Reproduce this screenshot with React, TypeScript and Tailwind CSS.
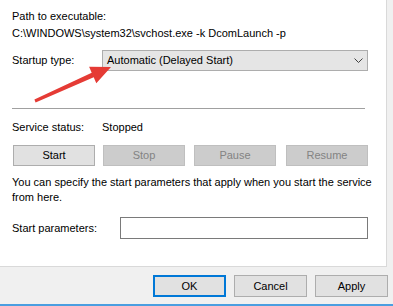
import React from "react";

const font = { fontFamily: '"Liberation Sans", Arial, sans-serif' };

function Btn({ children, disabled, w, className = "" }: { children: React.ReactNode; disabled?: boolean; w: string; className?: string }) {
  return (
    <div
      className={
        "flex items-center justify-center h-[21px] border " +
        (disabled ? "bg-[#cccccc] border-[#bfbfbf] text-[#838383] " : "bg-[#e1e1e1] border-[#adadad] text-black ") +
        w +
        " " +
        className
      }
    >
      {children}
    </div>
  );
}

export default function App() {
  return (
    <div className="relative w-[393px] h-[306px] bg-[#f0f0f0] flex flex-col overflow-hidden text-[11px] leading-[13px] text-black" style={font}>
      <div className="w-[387px] h-[267px] bg-white border-r border-b border-[#d9d9d9] flex flex-col pl-[12px] pt-[10px]">
        <div>Path to executable:</div>
        <div className="mt-[4px]">C:\WINDOWS\system32\svchost.exe -k DcomLaunch -p</div>
        <div className="mt-[10px] flex items-center h-[21px]">
          <div className="w-[90px]">Startup type:</div>
          <div className="w-[266px] h-[21px] bg-[#e5e5e5] border border-[#adadad] flex items-center pl-[4px] pr-[4px] justify-between">
            <span>Automatic (Delayed Start)</span>
            <svg width="9" height="6" viewBox="0 0 9 6">
              <path d="M0.5 0.5 L4.5 4.5 L8.5 0.5" fill="none" stroke="#404040" strokeWidth="1" />
            </svg>
          </div>
        </div>
        <div className="mt-[37px] w-[353px] h-px bg-[#a0a0a0]" />
        <div className="mt-[12px] flex">
          <div className="w-[90px]">Service status:</div>
          <div>Stopped</div>
        </div>
        <div className="mt-[11px] flex">
          <Btn w="w-[82px]" className="ml-[1px]">Start</Btn>
          <Btn w="w-[82px]" disabled className="ml-[8px]">Stop</Btn>
          <Btn w="w-[82px]" disabled className="ml-[9px]">Pause</Btn>
          <Btn w="w-[82px]" disabled className="ml-[10px]">Resume</Btn>
        </div>
        <div className="mt-[9px] leading-[15px] w-[360px]">
          You can specify the start parameters that apply when you start the service from here.
        </div>
        <div className="mt-[12px] flex items-center">
          <div className="w-[108px]">Start parameters:</div>
          <div className="w-[248px] h-[22px] bg-white border border-[#7a7a7a]" />
        </div>
      </div>
      <div className="flex justify-end pr-[5px] mt-[8px]">
        <div className="w-[73px] h-[22px] border-2 border-[#0078d7] bg-[#e1e1e1] flex items-center justify-center">OK</div>
        <div className="ml-[8px] w-[73px] h-[22px] border border-[#adadad] bg-[#e1e1e1] flex items-center justify-center">Cancel</div>
        <div className="ml-[8px] w-[73px] h-[22px] border border-[#adadad] bg-[#e1e1e1] flex items-center justify-center">Apply</div>
      </div>
      <div className="mt-[7px] h-[2px] bg-[#4a9ee0]" />
      <svg className="absolute left-0 top-0" width="393" height="306" viewBox="0 0 393 306">
        <polygon
          points="34.4,99.6 91.7,72.7 89.1,66.8 111,67 96.3,83.2 93.7,77.3 35.6,102.4"
          fill="#e53b35"
        />
      </svg>
    </div>
  );
}
